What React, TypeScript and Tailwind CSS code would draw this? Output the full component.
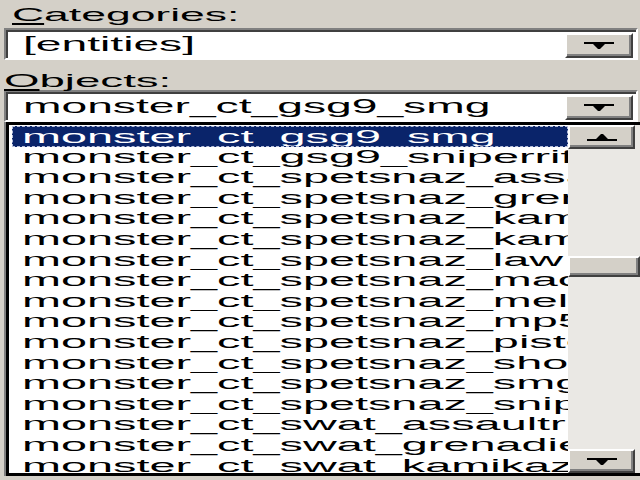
import React from "react";

const items = [
  "monster_ct_gsg9_smg",
  "monster_ct_gsg9_sniperrifle",
  "monster_ct_spetsnaz_assault",
  "monster_ct_spetsnaz_grenadier",
  "monster_ct_spetsnaz_kamikaze",
  "monster_ct_spetsnaz_kamikaze2",
  "monster_ct_spetsnaz_law",
  "monster_ct_spetsnaz_machinegun",
  "monster_ct_spetsnaz_melee",
  "monster_ct_spetsnaz_mp5",
  "monster_ct_spetsnaz_pistol",
  "monster_ct_spetsnaz_shotgun",
  "monster_ct_spetsnaz_smg",
  "monster_ct_spetsnaz_sniper",
  "monster_ct_swat_assaultrifle",
  "monster_ct_swat_grenadier",
  "monster_ct_swat_kamikaze",
];

function DownArrow() {
  return (
    <svg width="30" height="7" viewBox="0 0 30 7">
      <polygon points="0,0 30,0 30,2 21,2 18,5 16,7 14,7 12,5 9,2 0,2" fill="#000" />
    </svg>
  );
}

function UpArrow() {
  return (
    <svg width="30" height="7" viewBox="0 0 30 7">
      <polygon points="0,7 30,7 30,5 21,5 18,2 16,0 14,0 12,2 9,5 0,5" fill="#000" />
    </svg>
  );
}

function RaisedButton({ children, className }: { children?: React.ReactNode; className: string }) {
  return (
    <div
      className={
        "flex items-center justify-center bg-[#d4d0c8] border-t-2 border-l-2 border-t-white border-l-white border-b-2 border-r-2 border-b-[#404040] border-r-[#404040] shadow-[inset_-2px_-2px_0_#808080] " +
        className
      }
    >
      {children}
    </div>
  );
}

function Combo({ text }: { text: string }) {
  return (
    <div className="ml-[4px] w-[634px] h-[32px] flex items-center bg-white border-t-2 border-l-2 border-t-[#808080] border-l-[#808080] border-b-2 border-r-2 border-b-white border-r-white shadow-[inset_2px_2px_0_#404040]">
      <div className="flex-1 overflow-hidden pl-[17px] pt-[3px]">
        <span className="inline-block origin-left scale-x-[2.2] whitespace-nowrap text-[21px] leading-[22px]">
          {text}
        </span>
      </div>
      <RaisedButton className="w-[68px] h-[25px] mr-[3px] mt-[2px]">
        <DownArrow />
      </RaisedButton>
    </div>
  );
}

export default function App() {
  return (
    <div className="w-[640px] h-[480px] overflow-hidden bg-[#d4d0c8] text-black font-['Liberation_Sans',Arial,sans-serif]">
      <div className="h-[28px] pl-[12px] pt-[5px] text-[18px] leading-[20px]">
        <span className="inline-block origin-left scale-x-[2.47] whitespace-nowrap">
          <span className="underline decoration-2 underline-offset-[2px]">C</span>ategories:
        </span>
      </div>
      <Combo text="[entities]" />
      <div className="h-[30px] pl-[4px] pt-[11px] text-[19px] leading-[20px]">
        <span className="inline-block origin-left scale-x-[2.4] whitespace-nowrap">
          <span className="underline decoration-2 underline-offset-[2px]">O</span>bjects:
        </span>
      </div>
      <Combo text="monster_ct_gsg9_smg" />
      <div className="ml-[4px] w-[640px] h-[354px] border-l-2 border-[#808080]">
        <div className="h-full flex border-l-[3px] border-t-[3px] border-b-[3px] border-black bg-white">
          <div className="w-[559px] h-full overflow-hidden pl-[3px] pt-[1px]">
            {items.map((it, i) => (
              <div
                key={it}
                className={
                  "h-[20.6px] overflow-hidden whitespace-nowrap text-[18px] leading-[20.6px] " +
                  (i === 0
                    ? "bg-[#0a246a] text-white border border-dashed border-[#b8c0dc] pl-[9px] leading-[18.6px]"
                    : "pl-[10px]")
                }
              >
                <span className="inline-block origin-left scale-x-[2.6]">{it}</span>
              </div>
            ))}
          </div>
          <div className="w-[72px] h-full flex flex-col bg-[#eae8e4]">
            <RaisedButton className="w-[67px] h-[24px] shrink-0">
              <UpArrow />
            </RaisedButton>
            <div className="h-[107px] shrink-0" />
            <RaisedButton className="w-[72px] h-[21px] shrink-0" />
            <div className="flex-1" />
            <RaisedButton className="w-[67px] h-[24px] shrink-0">
              <DownArrow />
            </RaisedButton>
          </div>
        </div>
      </div>
    </div>
  );
}
